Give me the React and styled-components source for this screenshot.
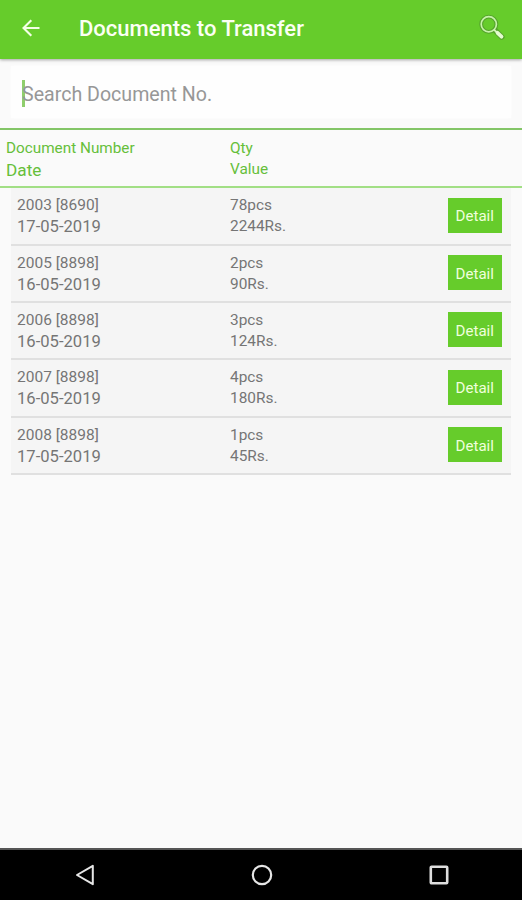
import styled, { createGlobalStyle } from "styled-components";

const GlobalStyle = createGlobalStyle`
  :root {
    --green: #66cc2b;
    --green-text: #66bf3a;
    --grey-light: #fafafa;
    --grey-row: #f5f5f5;
    --grey-line: #e0e0e0;
    --grey-text: #757575;
  }

  * {
    box-sizing: border-box;
  }

  body {
    margin: 0;
    font-family: Roboto, "Liberation Sans", sans-serif;
  }
`;

const Screen = styled.div`
  width: 100%;
  height: 100vh;
  display: flex;
  flex-direction: column;
  background: var(--grey-light);
`;

const AppBar = styled.header`
  height: 59px;
  flex-shrink: 0;
  padding: 0 16px 3px 21px;
  display: flex;
  align-items: center;
  background: var(--green);
  box-shadow: 0 1px 3px rgba(0, 0, 0, 0.35);
`;

const IconButton = styled.button`
  padding: 0;
  border: 0;
  display: flex;
  background: transparent;
  cursor: pointer;
`;

const Title = styled.h1`
  flex: 1;
  margin: 1px 0 0 37px;
  color: #fbfff4;
  font-size: 22px;
  line-height: 28px;
  font-weight: 500;
`;

const SearchBox = styled.div`
  height: 52px;
  flex-shrink: 0;
  margin: 7px 11px 10px;
  padding-left: 11px;
  display: flex;
  align-items: center;
  background: #fefefe;
  box-shadow: 0 0 3px rgba(255, 255, 255, 0.9);
`;

const Cursor = styled.span`
  width: 3px;
  height: 27px;
  margin: 2px -3px 0 0;
  background: #8fce6c;
`;

const Placeholder = styled.span`
  padding-top: 6px;
  color: #979797;
  font-size: 19.6px;
  line-height: 24px;
`;

const Columns = styled.div`
  display: grid;
  grid-template-columns: ${(props) => props.$first}px 1fr auto;
`;

const TableHead = styled(Columns)`
  height: 60.2px;
  flex-shrink: 0;
  padding: 8px 6px 0;
  color: var(--green-text);
  border-top: 2px solid #83c567;
  border-bottom: 2px solid #a2df85;
`;

const List = styled.main`
  flex: 1;
  padding: 0 11px;
`;

const Row = styled(Columns)`
  height: 57.4px;
  padding: 7px 9px 0 6px;
  color: var(--grey-text);
  background: var(--grey-row);
  border-bottom: 2px solid var(--grey-line);
`;

const Cell = styled.div`
  display: flex;
  flex-direction: column;
`;

const Line = styled.span`
  font-size: ${(props) => props.$size}px;
  line-height: ${(props) => props.$height || 21}px;
  white-space: nowrap;
`;

const DetailButton = styled.button`
  width: 54.5px;
  height: 35px;
  margin-top: 2.5px;
  padding: 2px 0 0;
  border: 0;
  background: var(--green);
  color: #efffdc;
  font-family: inherit;
  font-size: 15.1px;
  cursor: pointer;
`;

const NavBar = styled.nav`
  height: 52px;
  flex-shrink: 0;
  padding: 0 72px 0 74px;
  display: flex;
  justify-content: space-between;
  align-items: center;
  background: #000;
  border-top: 2px solid #555;
`;

const documents = [
  { number: "2003 [8690]", date: "17-05-2019", qty: "78pcs", value: "2244Rs." },
  { number: "2005 [8898]", date: "16-05-2019", qty: "2pcs", value: "90Rs." },
  { number: "2006 [8898]", date: "16-05-2019", qty: "3pcs", value: "124Rs." },
  { number: "2007 [8898]", date: "16-05-2019", qty: "4pcs", value: "180Rs." },
  { number: "2008 [8898]", date: "17-05-2019", qty: "1pcs", value: "45Rs." },
];

const BackArrow = () => (
  <svg width="21" height="20" viewBox="0 0 21 20" fill="none">
    <path
      d="M18.5 10H3M10.3 2.2L2.5 10l7.8 7.8"
      stroke="#f4ffe6"
      strokeWidth="2.1"
    />
  </svg>
);

const SearchIcon = () => (
  <svg width="28" height="28" viewBox="0 0 28 28" fill="none">
    <circle cx="10.8" cy="10.3" r="7.6" stroke="#55a22c" strokeWidth="3.8" />
    <path
      d="M17 16.3l6.8 6.6"
      stroke="#55a22c"
      strokeWidth="5.6"
      strokeLinecap="round"
    />
    <circle cx="10.8" cy="10.3" r="7.6" stroke="#c6f3a8" strokeWidth="1.7" />
    <path d="M16 15.6l4 4" stroke="#d6f7bd" strokeWidth="2" />
    <path
      d="M19.5 18.8l4 3.9"
      stroke="#e4fbd0"
      strokeWidth="3.8"
      strokeLinecap="round"
    />
  </svg>
);

const App = () => (
  <>
    <GlobalStyle />
    <Screen>
      <AppBar>
        <IconButton aria-label="Back">
          <BackArrow />
        </IconButton>
        <Title>Documents to Transfer</Title>
        <IconButton aria-label="Search">
          <SearchIcon />
        </IconButton>
      </AppBar>
      <SearchBox>
        <Cursor />
        <Placeholder>Search Document No.</Placeholder>
      </SearchBox>
      <TableHead $first={224}>
        <Cell>
          <Line $size={15.3}>Document Number</Line>
          <Line $size={17.2} $height={22}>
            Date
          </Line>
        </Cell>
        <Cell>
          <Line $size={15.4}>Qty</Line>
          <Line $size={15.4}>Value</Line>
        </Cell>
      </TableHead>
      <List>
        {documents.map((doc) => (
          <Row key={doc.number} $first={213}>
            <Cell>
              <Line $size={15.5}>{doc.number}</Line>
              <Line $size={16.6} $height={22}>
                {doc.date}
              </Line>
            </Cell>
            <Cell>
              <Line $size={15.4}>{doc.qty}</Line>
              <Line $size={15.4}>{doc.value}</Line>
            </Cell>
            <DetailButton>Detail</DetailButton>
          </Row>
        ))}
      </List>
      <NavBar>
        <svg width="22" height="22" viewBox="0 0 22 22" fill="none">
          <path
            d="M18.8 1.8v18.4L3 11z"
            stroke="#e6e6e6"
            strokeWidth="2"
            strokeLinejoin="round"
          />
        </svg>
        <svg width="22" height="22" viewBox="0 0 22 22" fill="none">
          <circle cx="11" cy="11" r="9.2" stroke="#e6e6e6" strokeWidth="2.2" />
        </svg>
        <svg width="22" height="22" viewBox="0 0 22 22" fill="none">
          <rect
            x="2.8"
            y="2.8"
            width="16.4"
            height="16.4"
            rx="0.8"
            stroke="#dedede"
            strokeWidth="2.6"
          />
        </svg>
      </NavBar>
    </Screen>
  </>
);

export default App;
